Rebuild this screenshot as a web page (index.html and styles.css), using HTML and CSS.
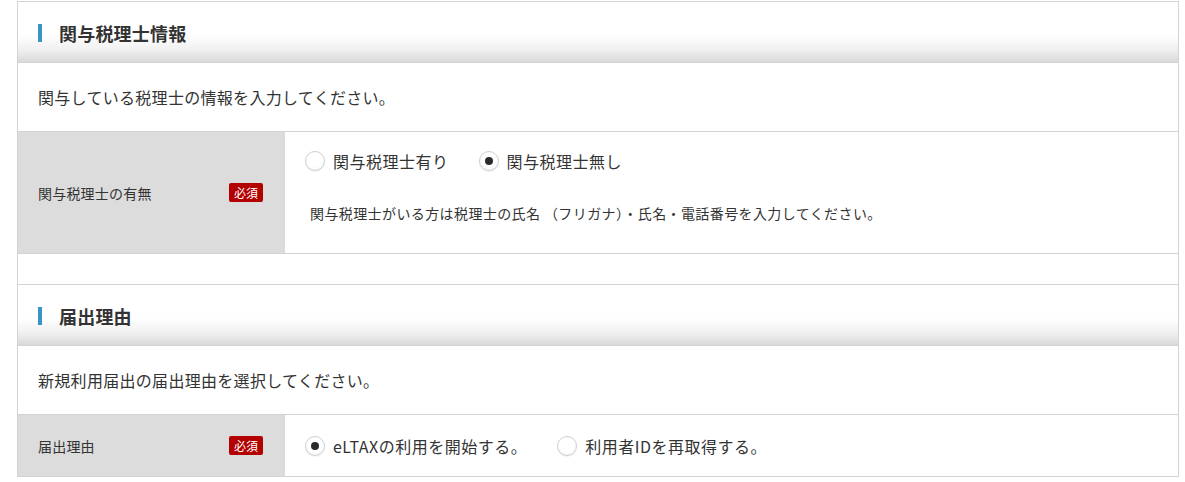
FILE: index.html
```html
<!DOCTYPE html>
<html lang="ja">
<head>
<meta charset="utf-8">
<link rel="stylesheet" href="styles.css">
</head>
<body>
<div class="page">
  <div class="panel">
    <div class="sec-head"><span class="bar"></span><h2 class="sec-title">関与税理士情報</h2></div>
    <div class="sec-desc">関与している税理士の情報を入力してください。</div>
    <div class="row row-tall">
      <div class="label-cell"><span class="label-text">関与税理士の有無</span><span class="badge">必須</span></div>
      <div class="value-cell value-stack">
        <div class="radios">
          <label class="radio"><input type="radio" name="kanyo"><span>関与税理士有り</span></label>
          <label class="radio"><input type="radio" name="kanyo" checked><span>関与税理士無し</span></label>
        </div>
        <p class="help">関与税理士がいる方は税理士の氏名 （フリガナ）・氏名・電話番号を入力してください。</p>
      </div>
    </div>
    <div class="spacer"></div>
    <div class="sec-head"><span class="bar"></span><h2 class="sec-title">届出理由</h2></div>
    <div class="sec-desc">新規利用届出の届出理由を選択してください。</div>
    <div class="row row-short">
      <div class="label-cell"><span class="label-text">届出理由</span><span class="badge">必須</span></div>
      <div class="value-cell">
        <div class="radios">
          <label class="radio"><input type="radio" name="riyu" checked><span>eLTAXの利用を開始する。</span></label>
          <label class="radio"><input type="radio" name="riyu"><span>利用者IDを再取得する。</span></label>
        </div>
      </div>
    </div>
  </div>
</div>
</body>
</html>
```

FILE: styles.css
```css
* { box-sizing: border-box; }
html, body { margin: 0; padding: 0; background: #fff; }
body {
  font-family: "Noto Sans CJK JP", "Noto Sans", sans-serif;
  color: #333;
}
.page { padding: 1px 0 0 17px; }
.panel {
  width: 1162px;
  border: 1px solid #d3d3d3;
  border-bottom: none;
}
.sec-head {
  height: 61px;
  display: flex;
  align-items: center;
  padding: 1px 0 0 20px;
  border-bottom: 1px solid #d3d3d3;
  background: linear-gradient(to bottom, #ffffff 0%, #ffffff 55%, #f0f0f0 80%, #d9d9d9 100%);
}
.bar {
  width: 4px;
  height: 18px;
  background: #3a93c3;
  margin-right: 17px;
}
.sec-title {
  margin: 0;
  font-size: 18px;
  font-weight: bold;
  color: #333;
  line-height: 24px;
  letter-spacing: 0.2px;
}
.sec-desc {
  height: 69px;
  display: flex;
  align-items: center;
  padding-left: 20px;
  font-size: 16px;
  letter-spacing: 0.3px;
  border-bottom: 1px solid #d3d3d3;
}
.row {
  display: flex;
  border-bottom: 1px solid #d3d3d3;
}
.row-tall { height: 122px; }
.row-short { height: 62px; }
.label-cell {
  width: 267px;
  flex: none;
  background: #dcdcdc;
  display: flex;
  align-items: center;
  justify-content: space-between;
  padding: 0 22px 0 20px;
  font-size: 14px;
  letter-spacing: 0.2px;
}
.badge {
  display: inline-block;
  width: 34px;
  height: 19px;
  line-height: 19px;
  text-align: center;
  background: #b30000;
  color: #fff;
  font-size: 12px;
  letter-spacing: 0;
  border-radius: 2px;
}
.value-cell {
  flex: 1;
  display: flex;
  align-items: center;
  padding-left: 20px;
}
.value-stack {
  flex-direction: column;
  align-items: flex-start;
  justify-content: flex-start;
  padding-top: 17px;
}
.radios {
  display: flex;
  align-items: center;
  height: 24px;
}
.radio {
  display: flex;
  align-items: center;
  font-size: 16px;
  letter-spacing: 0.5px;
  margin-right: 30px;
}
.radio input {
  -webkit-appearance: none;
  appearance: none;
  width: 20px;
  height: 20px;
  margin: 0 8px 0 0;
  border-radius: 50%;
  border: 1px solid #cfcfcf;
  background: radial-gradient(circle at 50% 40%, #ffffff 55%, #ececec 100%);
  box-shadow: 0 1px 1px rgba(0,0,0,0.06);
  position: relative;
  flex: none;
}
.radio input:checked::after {
  content: "";
  position: absolute;
  left: 5px;
  top: 5px;
  width: 8px;
  height: 8px;
  border-radius: 50%;
  background: #2b2b2b;
}
.help {
  margin: 30px 0 0 5px;
  font-size: 14px;
  line-height: 20px;
  letter-spacing: 0.4px;
}
.spacer {
  height: 31px;
  border-bottom: 1px solid #d3d3d3;
}
```
